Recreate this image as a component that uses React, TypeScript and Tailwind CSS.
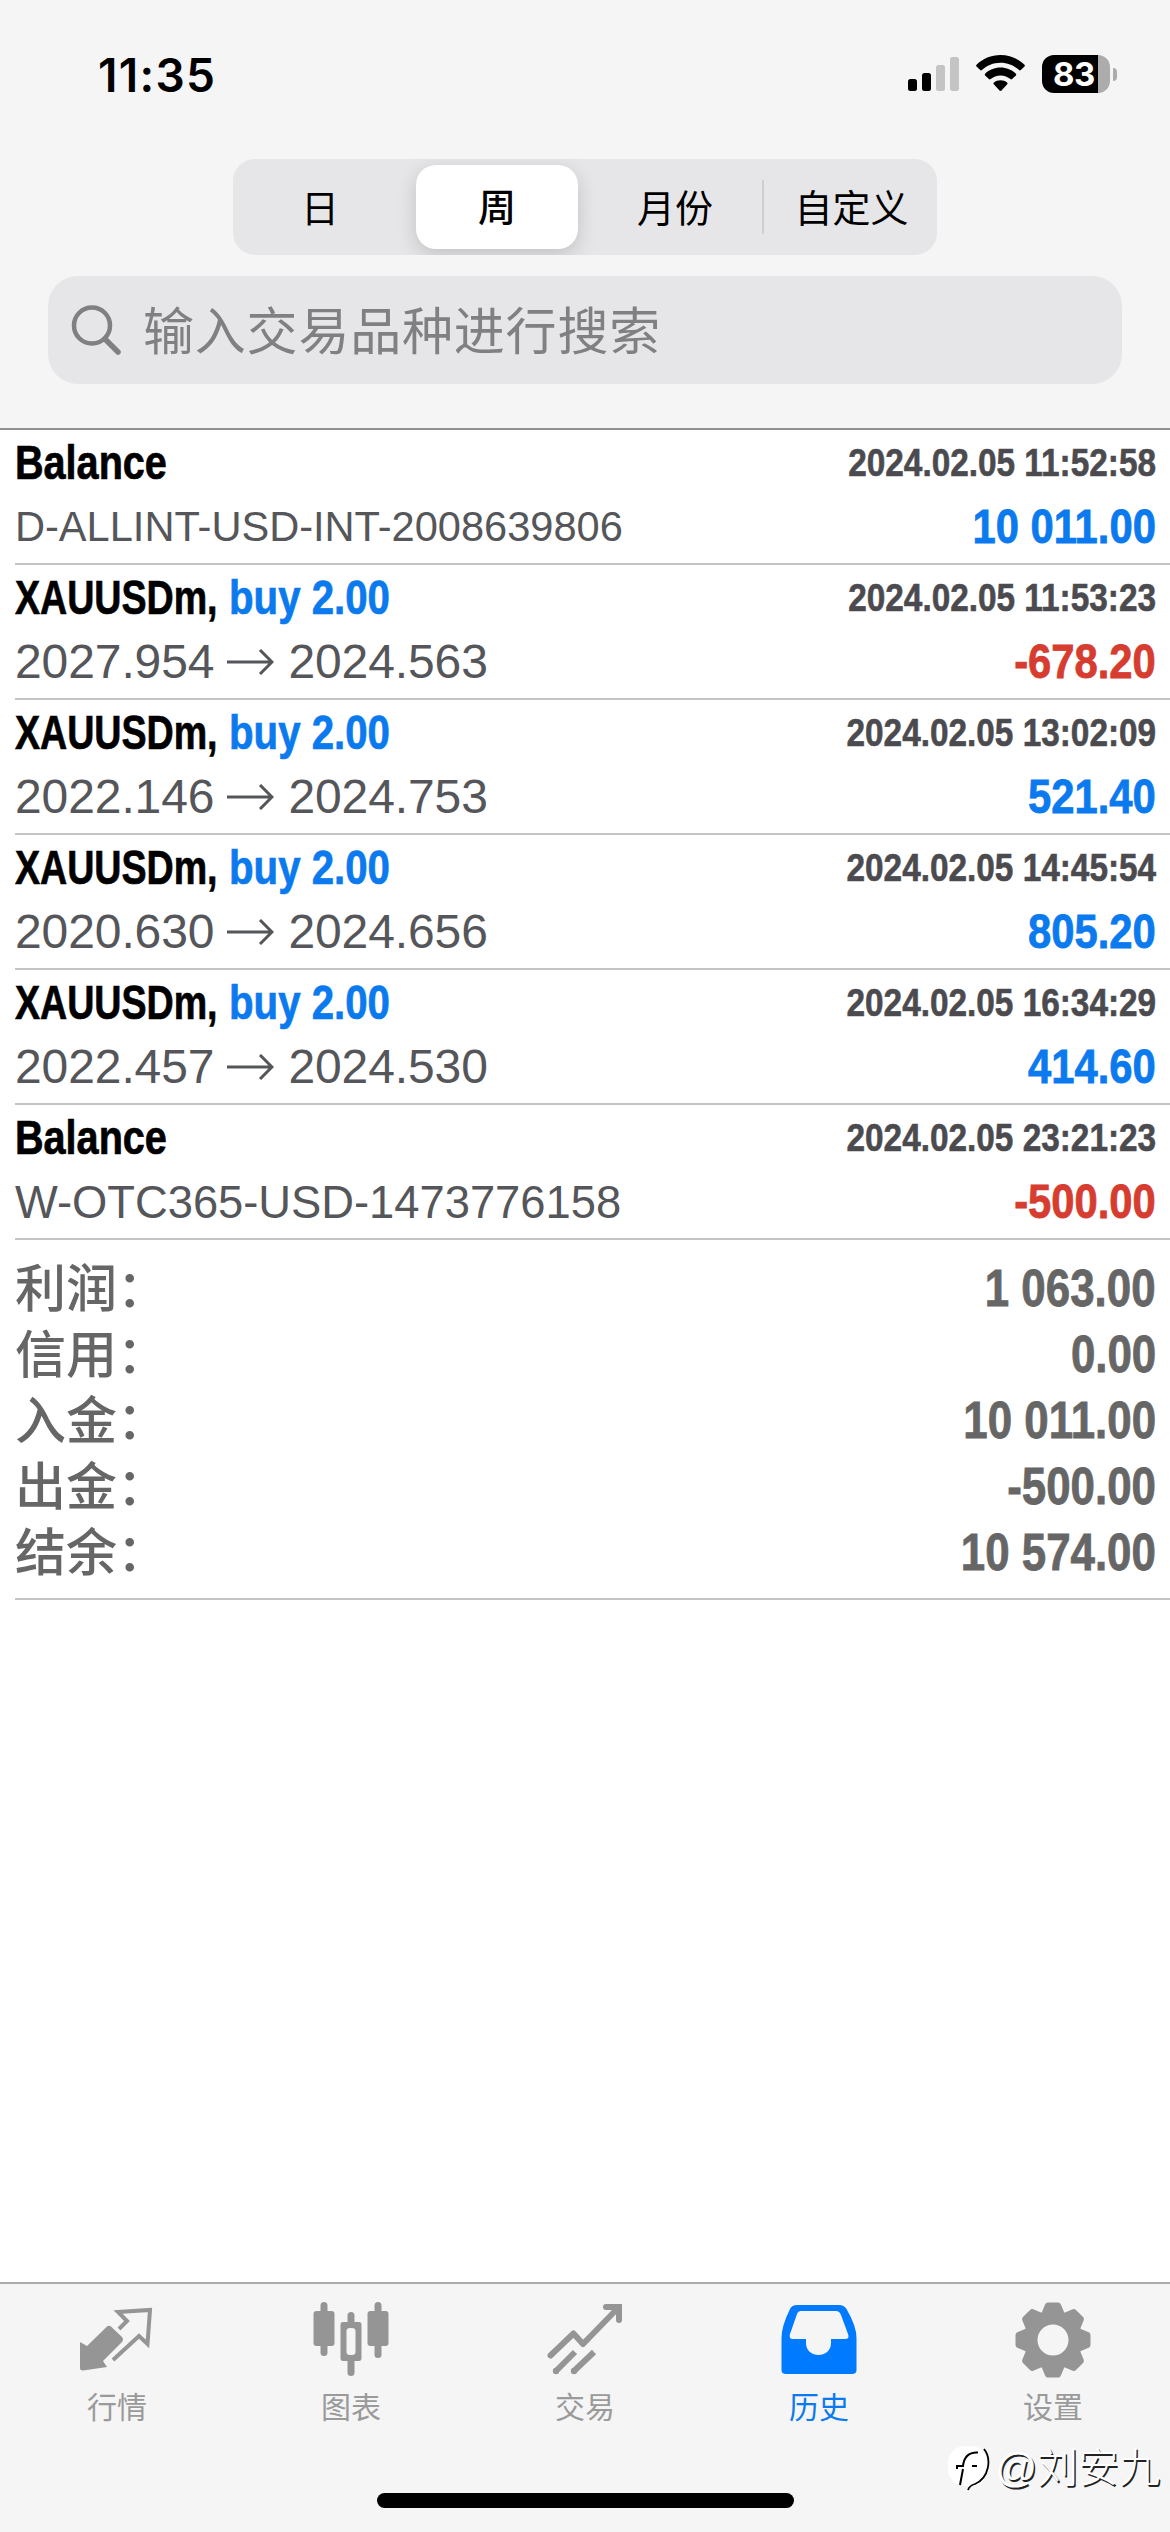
import React from "react";

const HISTORY = [
  { title: "Balance", time: "2024.02.05 11:52:58", memo: "D-ALLINT-USD-INT-2008639806", amount: "10 011.00" },
  { title: "XAUUSDm,", side: "buy 2.00", time: "2024.02.05 11:53:23", from: "2027.954", to: "2024.563", amount: "-678.20" },
  { title: "XAUUSDm,", side: "buy 2.00", time: "2024.02.05 13:02:09", from: "2022.146", to: "2024.753", amount: "521.40" },
  { title: "XAUUSDm,", side: "buy 2.00", time: "2024.02.05 14:45:54", from: "2020.630", to: "2024.656", amount: "805.20" },
  { title: "XAUUSDm,", side: "buy 2.00", time: "2024.02.05 16:34:29", from: "2022.457", to: "2024.530", amount: "414.60" },
  { title: "Balance", time: "2024.02.05 23:21:23", memo: "W-OTC365-USD-1473776158", amount: "-500.00" },
];

const SUMMARY = [
  ["利润：", "1 063.00"],
  ["信用：", "0.00"],
  ["入金：", "10 011.00"],
  ["出金：", "-500.00"],
  ["结余：", "10 574.00"],
];

function StatusBar() {
  return (
    <div className="flex h-[159px] shrink-0 items-start justify-between pl-[98px] pr-[53px] pt-[48px]">
      <span className="font-['Inter'] text-[46px] font-semibold leading-[54px] tracking-[1.3px] text-black">11:35</span>
      <div className="flex items-start pt-[7px]">
        <svg className="mr-[16px] mt-[2px] h-[34px] w-[52px]" viewBox="0 0 52 34">
          <rect x="0" y="22" width="9" height="12" rx="2.5" />
          <rect x="14" y="16" width="9" height="18" rx="2.5" />
          <rect x="28" y="8" width="9" height="26" rx="2.5" fill="#c4c4c4" />
          <rect x="42" y="0" width="9" height="34" rx="2.5" fill="#c4c4c4" />
        </svg>
        <svg className="mr-[17px] h-[37px] w-[49px]" viewBox="0 0 49 37">
          <path d="M24.500 0C33.800 0 42.300 3.700 48.500 9.700C49 10.200 49 10.900 48.500 11.400L44.800 15.100C44.300 15.600 43.600 15.600 43.100 15.100C38.300 10.500 31.700 7.800 24.500 7.800S10.700 10.500 5.900 15.100C5.400 15.600 4.700 15.600 4.200 15.100L.5 11.400C0 10.900 0 10.200.5 9.700C6.700 3.700 15.200 0 24.500 0Z" />
          <path d="M24.500 12.600C30.500 12.600 35.900 14.900 39.900 18.700C40.400 19.200 40.400 19.900 39.900 20.400L36.100 24.100C35.600 24.600 34.900 24.600 34.400 24.100C31.800 21.800 28.300 20.400 24.500 20.400S17.200 21.800 14.600 24.100C14.100 24.600 13.400 24.600 12.900 24.100L9.100 20.400C8.600 19.900 8.600 19.200 9.100 18.700C13.100 14.900 18.500 12.600 24.500 12.600Z" />
          <path d="M24.500 25.200C27 25.200 29.300 26.100 31.100 27.500C31.700 28 31.700 28.800 31.200 29.300L25.500 35.500C24.900 36.100 24.100 36.100 23.500 35.500L17.800 29.300C17.300 28.800 17.300 28 17.900 27.500C19.700 26.100 22 25.200 24.500 25.200Z" />
        </svg>
        <div className="flex items-center">
          <div className="flex h-[38px] w-[68px] items-center rounded-[12px] bg-[linear-gradient(to_right,#000_56px,#acacac_56px)] pl-[11px] font-['Inter'] text-[33px] font-bold leading-[38px] tracking-[-0.5px] text-white">
            83
          </div>
          <div className="ml-[3px] h-[13px] w-[4px] rounded-r-[5px] bg-[#acacac]" />
        </div>
      </div>
    </div>
  );
}

function Segments() {
  return (
    <div className="ml-[233px] flex h-[96px] w-[704px] shrink-0 items-center overflow-hidden rounded-[22px] bg-[#e6e6e8] pl-px text-[38px] text-black">
      <div className="w-[182px] pt-[4px] pr-[10px] text-center">日</div>
      <div className="flex h-[84px] w-[162px] items-center justify-center rounded-[20px] bg-white pt-[3px] font-medium shadow-[0_6px_20px_rgba(0,0,0,0.16)]">周</div>
      <div className="w-[184px] pl-[10px] pt-[4px] text-center">月份</div>
      <div className="h-[54px] w-[2px] bg-[#cfcfd1]" />
      <div className="flex-1 pt-[4px] pl-[2px] text-center">自定义</div>
    </div>
  );
}

function SearchBox() {
  return (
    <div className="mx-[48px] mt-[21px] flex h-[108px] shrink-0 items-center rounded-[30px] bg-[#e6e6e8] pl-[23px] text-[#808083]">
      <svg className="h-[50px] w-[50px]" viewBox="0 0 50 50" fill="none" stroke="#808083" strokeLinecap="round">
        <circle cx="21" cy="20.500" r="18" strokeWidth="4.500" />
        <path d="M34 34L47 47" strokeWidth="5.500" />
      </svg>
      <span className="ml-[22px] pt-[5px] text-[51px] leading-[74px] tracking-[0.8px]">输入交易品种进行搜索</span>
    </div>
  );
}

function Amount({ value }: { value: string }) {
  return (
    <span
      className={
        "block origin-right scale-x-[0.87] text-[48px] font-bold leading-[56px] [-webkit-text-stroke:0.8px_currentColor] " +
        (value.startsWith("-") ? "text-[#d63c2f]" : "text-[#0a7aee]")
      }
    >
      {value}
    </span>
  );
}

function HistoryRow({ item }: { item: (typeof HISTORY)[number] }) {
  return (
    <div className="ml-[15px] flex h-[135px] shrink-0 justify-between border-b-2 border-[#c4c4c6] pr-[14px] pt-[5px]">
      <div className="flex flex-col whitespace-nowrap">
        {item.side ? (
          <div className="flex text-[48px] font-bold leading-[56px] [-webkit-text-stroke:0.7px_currentColor]">
            <span className="block w-[214px] origin-left scale-x-[0.783] text-black">{item.title}</span>
            <span className="block origin-left scale-x-[0.838] text-[#0a7aee]">{item.side}</span>
          </div>
        ) : (
          <span className="block origin-left scale-x-[0.825] text-[48px] font-bold leading-[56px] text-black [-webkit-text-stroke:0.7px_currentColor]">
            {item.title}
          </span>
        )}
        {item.memo ? (
          <span
            className={
              "mt-[8px] block origin-left leading-[56px] text-[#55565a] " +
              (item.memo.startsWith("D") ? "scale-x-[0.99] text-[42px]" : "scale-x-[0.985] text-[46px]")
            }
          >
            {item.memo}
          </span>
        ) : (
          <span className="mt-[8px] flex items-center text-[48px] leading-[56px] tracking-[-0.1px] text-[#55565a]">
            {item.from}
            <svg className="ml-[13px] mr-[14px] h-[26px] w-[47px]" viewBox="0 0 47 26" fill="none" stroke="#55565a" strokeWidth="3">
              <path d="M0 13H45M33 1L45 13L33 25" />
            </svg>
            {item.to}
          </span>
        )}
      </div>
      <div className="flex flex-col items-end whitespace-nowrap">
        <span className="block origin-right scale-x-[0.855] text-[39px] font-bold leading-[56px] text-[#4b4b4f] [-webkit-text-stroke:0.6px_currentColor]">
          {item.time}
        </span>
        <div className="mt-[8px]">
          <Amount value={item.amount} />
        </div>
      </div>
    </div>
  );
}

function Summary() {
  return (
    <div className="ml-[15px] h-[360px] shrink-0 border-b-2 border-[#c4c4c6] pr-[14px] pt-[15px] text-[#666]">
      {SUMMARY.map(([label, value]) => (
        <div key={label} className="flex h-[66px] items-center justify-between text-[51px]">
          <span className="font-['Noto_Sans_CJK_SC'] pb-[5px] font-medium leading-[61px]">{label}</span>
          <span className="origin-right scale-x-[0.86] pt-[2px] font-bold leading-[64px] [-webkit-text-stroke:0.8px_currentColor]">{value}</span>
        </div>
      ))}
    </div>
  );
}

function QuotesIcon() {
  return (
    <svg className="h-[76px] w-[76px]" viewBox="0 0 76 76">
      <path d="M1 40L8 44L28 24.500Q30 23 32 24.500L43 35Q45 37.500 43 40L24 59L28 65L4 68.500Q1 68.500 1 66Z" fill="#959595" />
      <path d="M40 27L48 19L39 10L71 8L68.500 42L60 34L34 58" fill="none" stroke="#959595" strokeWidth="4" />
    </svg>
  );
}

function ChartIcon() {
  return (
    <svg className="h-[76px] w-[76px]" viewBox="0 0 76 76" fill="#959595">
      <rect x="7.500" y="0" width="7" height="54" rx="3.500" />
      <rect x=".5" y="9" width="21" height="35" rx="3" />
      <rect x="61.500" y="0" width="7" height="56" rx="3.500" />
      <rect x="54.500" y="9" width="21" height="35" rx="3" />
      <rect x="34.500" y="10" width="7" height="16" rx="3.500" />
      <rect x="34.500" y="54" width="7" height="20" rx="3.500" />
      <path fillRule="evenodd" d="M30 20H46Q48.500 20 48.500 22.500V56Q48.500 59 46 59H30Q27.500 59 27.500 56V22.500Q27.500 20 30 20ZM37 26Q33.500 26 33.500 29V50Q33.500 53 37 53H39Q42.500 53 42.500 50V29Q42.500 26 39 26Z" />
    </svg>
  );
}

function TradeIcon() {
  return (
    <svg className="h-[76px] w-[76px]" viewBox="0 0 76 76" fill="none" stroke="#959595" strokeWidth="6">
      <path d="M3.500 53.500L26.500 31.500L36 42L71 6" strokeLinejoin="round" strokeLinecap="round" />
      <path d="M59 5H72V18" strokeLinecap="round" />
      <path d="M9 69L28 50M27 69L47 50" />
      <circle cx="9" cy="69" r="3.200" fill="#959595" stroke="none" />
      <circle cx="27" cy="69" r="3.200" fill="#959595" stroke="none" />
    </svg>
  );
}

function HistoryIcon() {
  return (
    <svg className="h-[76px] w-[76px]" viewBox="0 0 76 76">
      <path
        fill="#007aff"
        fillRule="evenodd"
        d="M16 3H58Q63 3 65.500 7Q75.500 24 75.500 36V68Q75.500 72 71 72H5Q.5 72 .5 68V36Q.5 24 9 7Q11 3 16 3ZM20 9Q17 9 16 12L9 32Q7.500 37 12 37H25V41C25 57 50 57 50 41V37H64Q69 37 67 32L60 13Q58.500 9 55 9Z"
      />
    </svg>
  );
}

function SettingsIcon() {
  return (
    <svg className="h-[76px] w-[76px]" viewBox="0 0 76 76">
      <g fill="#959595" stroke="#959595" strokeWidth="6" strokeLinejoin="round">
        {[0, 45, 90, 135, 180, 225, 270, 315].map((angle) => (
          <path key={angle} transform={`rotate(${angle} 38 38)`} d="M33 3.500H43L47 13H29Z" />
        ))}
      </g>
      <circle cx="38" cy="38" r="22.500" fill="none" stroke="#959595" strokeWidth="14" />
    </svg>
  );
}

const TABS = [
  { label: "行情", Icon: QuotesIcon },
  { label: "图表", Icon: ChartIcon },
  { label: "交易", Icon: TradeIcon },
  { label: "历史", Icon: HistoryIcon, active: true },
  { label: "设置", Icon: SettingsIcon },
];

function TabBar() {
  return (
    <div className="relative flex h-[250px] shrink-0 flex-col items-center border-t-2 border-[#ababab] bg-[#f5f5f5]">
      <div className="grid w-full grid-cols-5 pt-[18px]">
        {TABS.map(({ label, Icon, active }) => (
          <div key={label} className={"flex flex-col items-center " + (active ? "text-[#0a7aee]" : "text-[#9a9a9a]")}>
            <Icon />
            <span className="mt-[10px] text-[30px] leading-[40px]">{label}</span>
          </div>
        ))}
      </div>
      <div className="mt-auto mb-[24px] h-[15px] w-[417px] rounded-full bg-black" />
      <div className="absolute right-[10px] bottom-[39px] flex items-center">
        <svg className="h-[48px] w-[44px]" viewBox="0 0 44 48">
          <rect x="1" y="2" width="40" height="40" rx="17" fill="#fff" />
          <path d="M37 5C45 15 42 34 28 40C24 41 22 43 21 46" fill="none" stroke="#000" strokeWidth="1.800" />
          <path d="M10 25V22H16C17 13 22 8 31 8.500M16 25L13 41M25 22H30" fill="none" stroke="#000" strokeWidth="2" />
        </svg>
        <span className="ml-[4px] text-[41px] font-light leading-[50px] text-white [text-shadow:1.5px_1.5px_0_#222]">@刘安九</span>
      </div>
    </div>
  );
}

export default function App() {
  return (
    <div className="flex h-[2532px] w-[1170px] flex-col overflow-hidden bg-white font-['Liberation_Sans','Noto_Sans_CJK_SC',sans-serif]">
      <header className="flex h-[430px] shrink-0 flex-col border-b-2 border-[#909090] bg-[#f5f5f6]">
        <StatusBar />
        <Segments />
        <SearchBox />
      </header>
      <main className="flex flex-1 flex-col">
        {HISTORY.map((item) => (
          <HistoryRow key={item.time} item={item} />
        ))}
        <Summary />
      </main>
      <TabBar />
    </div>
  );
}
